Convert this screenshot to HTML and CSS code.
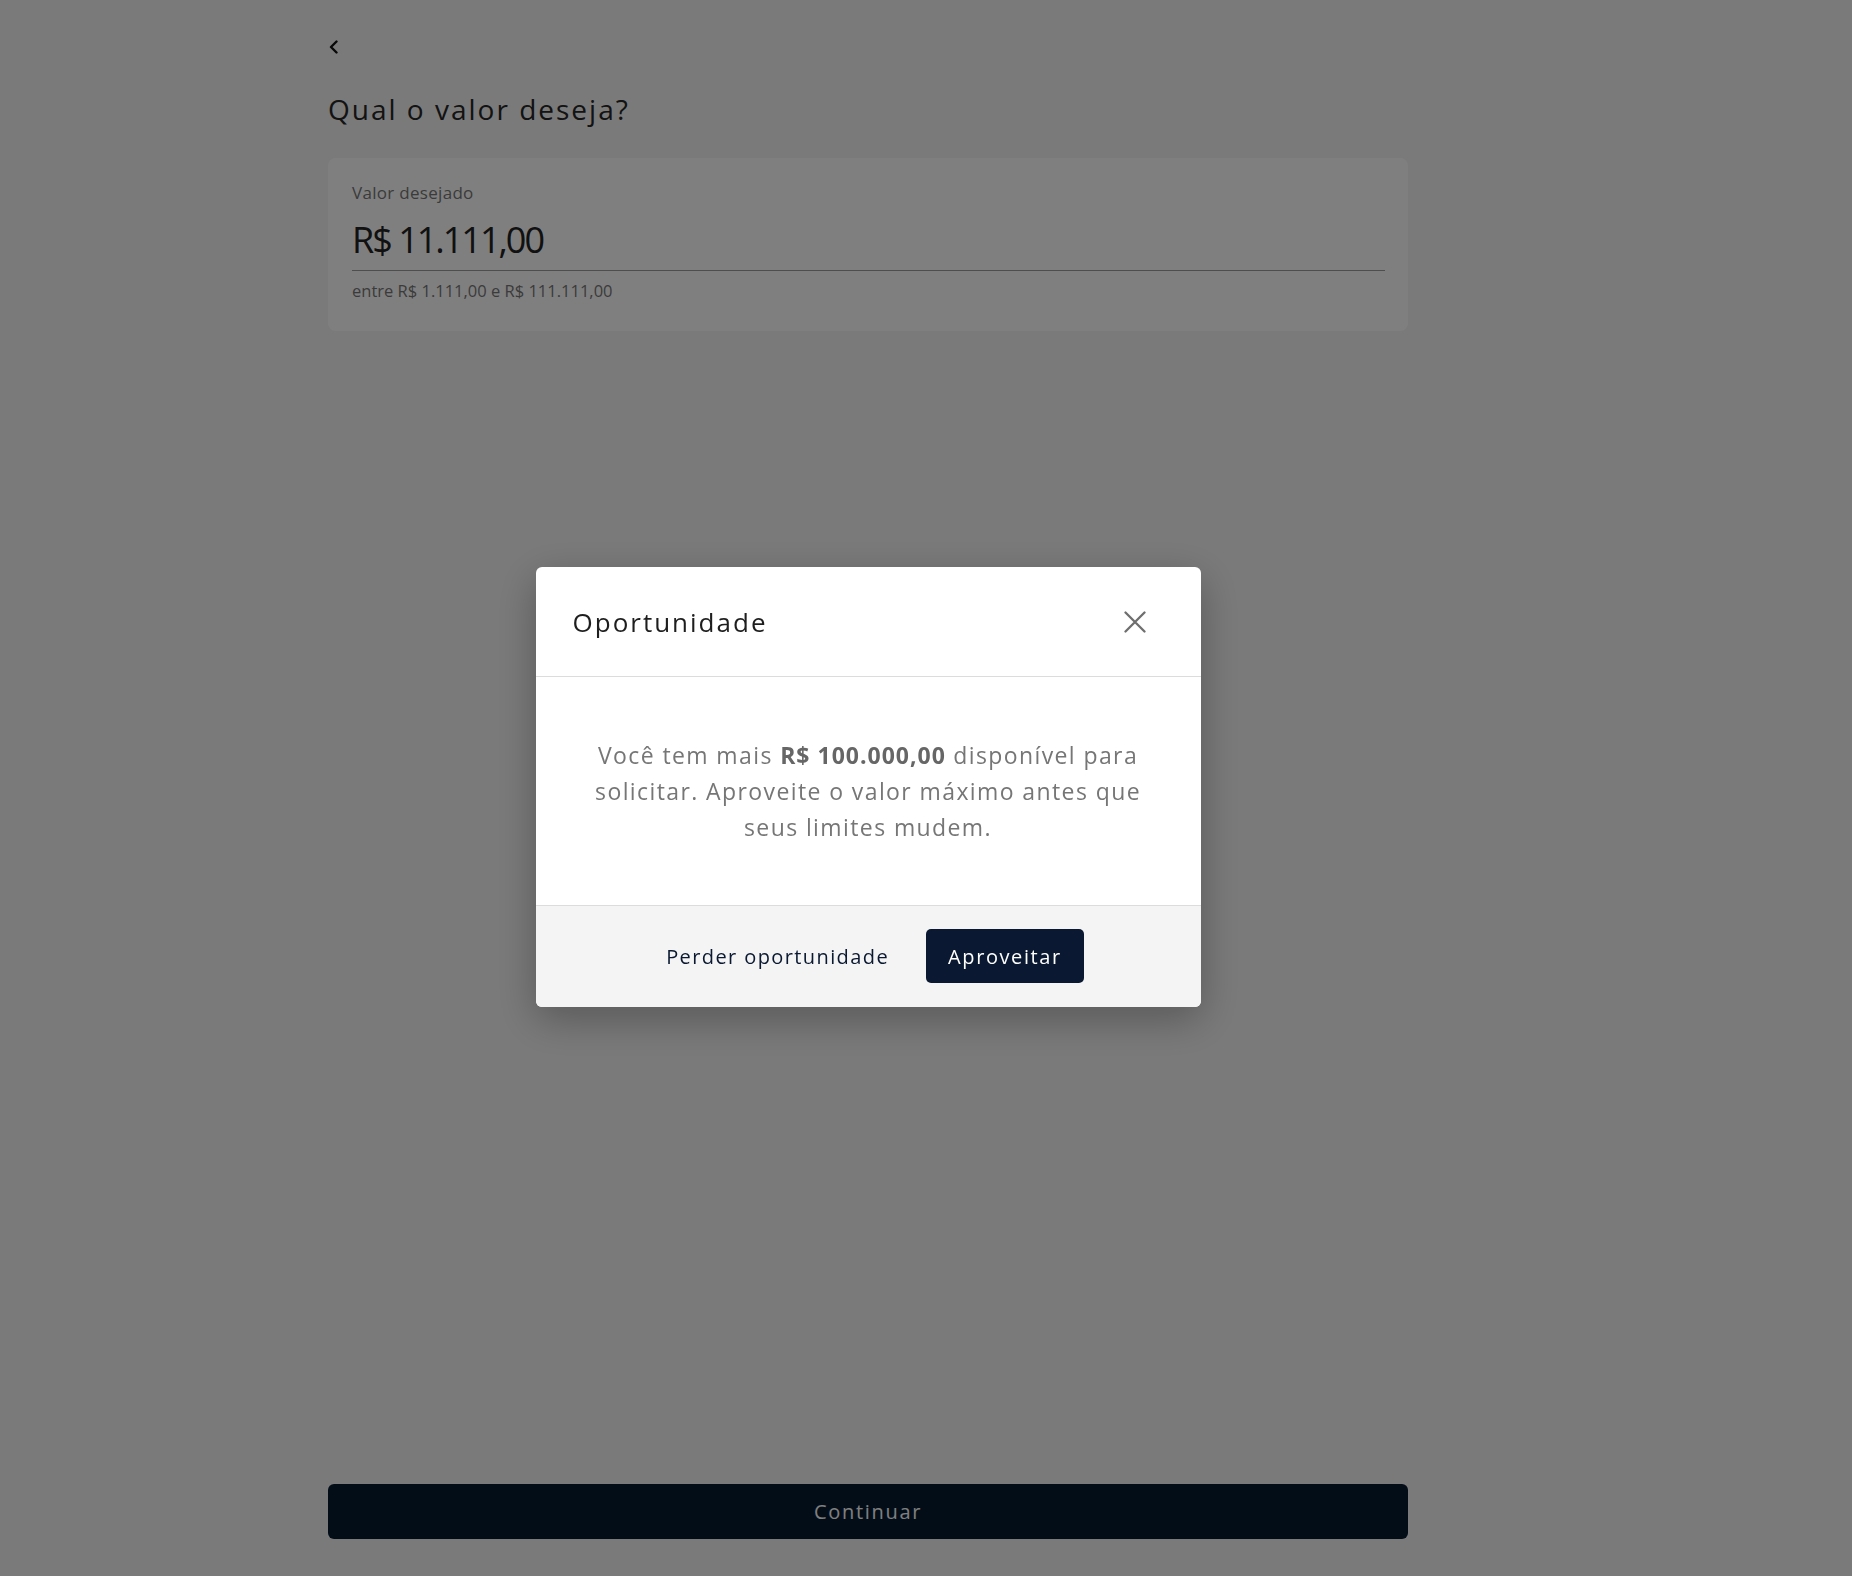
FILE: index.html
```html
<!DOCTYPE html>
<html lang="pt-BR">
<head>
<meta charset="utf-8">
<title>Qual o valor deseja?</title>
<link rel="stylesheet" href="styles.css">
</head>
<body>
<main class="page">
  <div class="top">
    <button class="back" aria-label="Voltar">
      <svg width="12" height="14" viewBox="0 0 12 14"><path d="M8.5 1.5 L3 7 L8.5 12.5" fill="none" stroke="#111" stroke-width="2.4" stroke-linecap="round" stroke-linejoin="round"/></svg>
    </button>
    <h1 class="title">Qual o valor deseja?</h1>
    <section class="card">
      <label class="field-label">Valor desejado</label>
      <div class="field-value">R$ 11.111,00</div>
      <div class="field-help">entre R$ 1.111,00 e R$ 111.111,00</div>
    </section>
  </div>
  <button class="continue">Continuar</button>
</main>

<div class="overlay">
  <div class="modal" role="dialog">
    <header class="modal-head">
      <h2 class="modal-title">Oportunidade</h2>
      <button class="close" aria-label="Fechar">
        <svg width="22" height="22" viewBox="0 0 22 22"><path d="M1.5 1.5 L20.5 20.5 M20.5 1.5 L1.5 20.5" stroke="#6e6e6e" stroke-width="2.3" stroke-linecap="round"/></svg>
      </button>
    </header>
    <div class="modal-body">
      <p>Você tem mais <strong>R$ 100.000,00</strong> disponível para<br>solicitar. Aproveite o valor máximo antes que<br>seus limites mudem.</p>
    </div>
    <footer class="modal-foot">
      <button class="btn-ghost">Perder oportunidade</button>
      <button class="btn-primary">Aproveitar</button>
    </footer>
  </div>
</div>
</body>
</html>
```
FILE: styles.css
```css
* { box-sizing: border-box; }
html, body { height: 100%; }
body {
  margin: 0;
  background: #f4f4f4;
  font-family: "Open Sans", "DejaVu Sans", sans-serif;
  color: #222;
}
button { font-family: inherit; cursor: pointer; }

.page {
  width: 1080px;
  margin-left: 328px;
  height: 1576px;
  display: flex;
  flex-direction: column;
  justify-content: space-between;
  padding-bottom: 37px;
}
.top { display: flex; flex-direction: column; align-items: flex-start; }

.back {
  margin-top: 40px;
  border: 0;
  background: none;
  padding: 0;
  width: 12px;
  height: 14px;
  display: flex;
}
.title {
  margin: 37px 0 0;
  font-size: 28px;
  font-weight: 500;
  letter-spacing: 2px;
  line-height: 36px;
  color: #262626;
}
.card {
  margin-top: 31px;
  align-self: stretch;
  background: #fff;
  border-radius: 8px;
  padding: 23px 23px 28px 24px;
  display: flex;
  flex-direction: column;
}
.field-label {
  font-size: 17px;
  line-height: 24px;
  letter-spacing: 0.3px;
  color: #777;
}
.field-value {
  margin-top: 13px;
  font-size: 36px;
  line-height: 44px;
  letter-spacing: -2px;
  font-weight: 500;
  color: #222;
  padding-bottom: 8px;
  border-bottom: 1px solid #9c9c9c;
}
.field-help {
  margin-top: 8px;
  font-size: 16.5px;
  line-height: 24px;
  letter-spacing: 0px;
  color: #777;
}

.continue {
  height: 55px;
  border: 0;
  border-radius: 6px;
  background: #061a31;
  color: #fff;
  font-size: 20px;
  letter-spacing: 1.7px;
}

.overlay {
  position: fixed;
  inset: 0;
  background: rgba(0,0,0,0.5);
  display: flex;
  align-items: center;
  justify-content: center;
  padding-right: 116px;
}
.modal {
  width: 665px;
  background: #fff;
  border-radius: 6px;
  overflow: hidden;
  box-shadow: 0 12px 40px rgba(0,0,0,0.28);
  margin-top: -2px;
}
.modal-head {
  height: 110px;
  border-bottom: 1px solid #dcdcdc;
  display: flex;
  align-items: center;
  justify-content: space-between;
  padding: 0 55px 0 37px;
}
.modal-title {
  margin: 0;
  font-size: 26px;
  font-weight: 500;
  letter-spacing: 2px;
  color: #1e1e1e;
}
.close {
  border: 0;
  background: none;
  padding: 0;
  width: 22px;
  height: 22px;
  display: flex;
}
.modal-body {
  padding: 60px 20px 60px;
  text-align: center;
}
.modal-body p {
  margin: 0;
  font-size: 23px;
  line-height: 36px;
  letter-spacing: 1.4px;
  color: #767676;
}
.modal-body strong { color: #666; font-weight: 700; letter-spacing: 1px; }

.modal-foot {
  background: #f4f4f4;
  border-top: 1px solid #dcdcdc;
  padding: 23px 9px 24px 0;
  display: flex;
  justify-content: center;
  gap: 14px;
}
.btn-ghost {
  border: 0;
  background: none;
  padding: 0 23px;
  height: 54px;
  font-size: 20px;
  letter-spacing: 1.4px;
  color: #0a1931;
}
.btn-primary {
  border: 0;
  border-radius: 5px;
  background: #0a1931;
  color: #fff;
  height: 54px;
  padding: 0 22px;
  font-size: 20px;
  letter-spacing: 1.6px;
}
```
